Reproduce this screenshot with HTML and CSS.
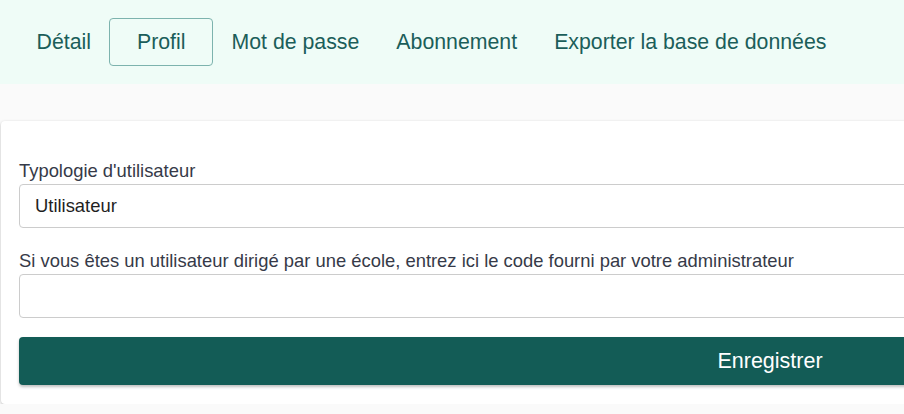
FILE: index.html
```html
<!DOCTYPE html>
<html lang="fr">
<head>
<meta charset="utf-8">
<title>Profil</title>
<link rel="stylesheet" href="styles.css">
</head>
<body>
<nav class="tabs">
  <a class="tab">Détail</a>
  <a class="tab active">Profil</a>
  <a class="tab">Mot de passe</a>
  <a class="tab">Abonnement</a>
  <a class="tab">Exporter la base de données</a>
</nav>
<main class="content">
  <form class="card">
    <div class="field">
      <label class="label">Typologie d'utilisateur</label>
      <div class="input">Utilisateur</div>
    </div>
    <div class="field">
      <label class="label">Si vous êtes un utilisateur dirigé par une école, entrez ici le code fourni par votre administrateur</label>
      <div class="input"></div>
    </div>
    <button type="button" class="submit">Enregistrer</button>
  </form>
</main>
</body>
</html>
```
FILE: styles.css
```css
html, body {
  margin: 0;
  padding: 0;
  overflow: hidden;
}
body {
  background: #fafafa;
  font-family: "Liberation Sans", Arial, sans-serif;
  width: 1540px;
}
.tabs {
  display: flex;
  align-items: center;
  height: 84px;
  padding-left: 18px;
  background: #effcf7;
}
.tab {
  display: block;
  padding: 0 18.5px;
  height: 48px;
  line-height: 48px;
  font-size: 21.3px;
  color: #1b5e5a;
  box-sizing: border-box;
  border-radius: 4px;
}
.tab.active {
  padding: 0 26.5px;
  border: 1px solid #7db3ae;
  line-height: 46px;
}
.content {
  padding: 37px 0 0 1px;
}
.card {
  width: 1538px;
  box-sizing: border-box;
  background: #fff;
  border-radius: 4px;
  box-shadow: 0 1px 3px rgba(0,0,0,0.25);
  padding: 39px 18px 19px;
  display: flex;
  flex-direction: column;
}
.field {
  display: flex;
  flex-direction: column;
  margin-bottom: 22px;
}
.field + .field {
  margin-bottom: 19px;
}
.label {
  font-size: 18.4px;
  line-height: 22px;
  margin-bottom: 2px;
  color: #363a48;
}
.input {
  height: 44px;
  box-sizing: border-box;
  border: 1px solid #cccccc;
  border-radius: 4px;
  padding: 0 15px;
  line-height: 42px;
  font-size: 18.4px;
  color: #1f1f1f;
}
.submit {
  height: 48px;
  border: none;
  border-radius: 4px;
  background: #135c56;
  color: #fff;
  font-family: "Liberation Sans", Arial, sans-serif;
  font-size: 21.5px;
  box-shadow: 0 2px 3px rgba(0,0,0,0.25);
}
```
